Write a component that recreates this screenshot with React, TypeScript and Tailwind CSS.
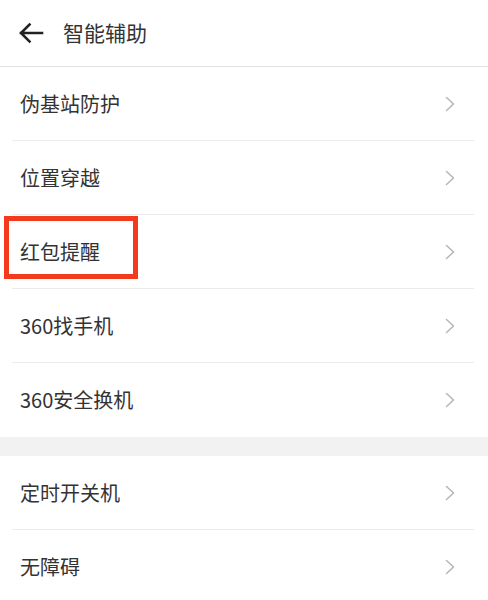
const groups: string[][] = [
  ["伪基站防护", "位置穿越", "红包提醒", "360找手机", "360安全换机"],
  ["定时开关机", "无障碍"],
];

function Chevron() {
  return (
    <svg width="10" height="16" viewBox="0 0 10 16" fill="none">
      <path d="M1.5 1.5 L8.5 8 L1.5 14.5" stroke="#b5b5b5" strokeWidth="1.5" strokeLinecap="round" strokeLinejoin="round" />
    </svg>
  );
}

function Row({ label, last }: { label: string; last: boolean }) {
  const marked = label === "红包提醒";
  return (
    <div className="relative">
      <div className={"ml-3 mr-[14px] h-[74px] flex items-center justify-between " + (last ? "" : "border-b border-[#ebebeb]")}>
        <span className="pl-2 text-[20px] text-[#333333]">{label}</span>
        <span className="mr-[19px] flex items-center">
          <Chevron />
        </span>
      </div>
      {marked && (
        <div className="absolute left-[4px] top-[1px] w-[134px] h-[63px] border-[5px] border-[#f33a1c]" />
      )}
    </div>
  );
}

export default function App() {
  return (
    <div
      className="w-[488px] h-[600px] overflow-hidden bg-white"
      style={{ fontFamily: '"Noto Sans CJK SC", "Noto Sans", sans-serif' }}
    >
      {/* header */}
      <div className="h-[67px] flex items-center border-b border-[#e2e2e2]">
        <svg className="ml-[18px]" width="26" height="22" viewBox="0 0 26 22" fill="none">
          <path d="M24 11 H3 M11.5 2.5 L3 11 L11.5 19.5" stroke="#222222" strokeWidth="2.6" strokeLinecap="square" />
        </svg>
        <span className="ml-[19px] text-[21px] text-[#333333]">智能辅助</span>
      </div>

      {groups.map((g, gi) => (
        <div key={gi}>
          {gi > 0 && <div className="h-[19px] bg-[#f2f2f2]" />}
          {g.map((label, i) => (
            <Row key={label} label={label} last={i === g.length - 1 && gi === 0} />
          ))}
        </div>
      ))}
    </div>
  );
}
